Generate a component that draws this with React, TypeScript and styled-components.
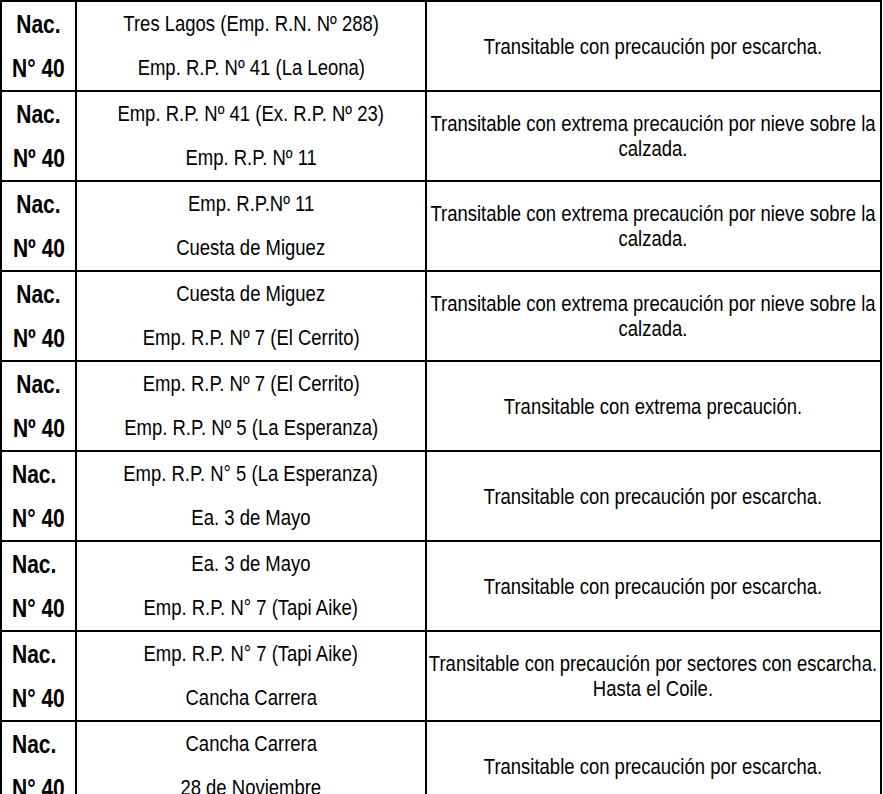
import styled, { createGlobalStyle } from "styled-components";

interface ITramo {
  ruta: string;
  desde: string;
  hasta: string;
  estado: string;
  left?: boolean;
}

const tramos: ITramo[] = [
  {
    ruta: "N° 40",
    desde: "Tres Lagos (Emp. R.N. Nº 288)",
    hasta: "Emp. R.P. Nº 41 (La Leona)",
    estado: "Transitable con precaución por escarcha.",
  },
  {
    ruta: "Nº 40",
    desde: "Emp. R.P. Nº 41 (Ex. R.P. Nº 23)",
    hasta: "Emp. R.P. Nº 11",
    estado: "Transitable con extrema precaución por nieve sobre la calzada.",
  },
  {
    ruta: "Nº 40",
    desde: "Emp. R.P.Nº 11",
    hasta: "Cuesta de Miguez",
    estado: "Transitable con extrema precaución por nieve sobre la calzada.",
  },
  {
    ruta: "Nº 40",
    desde: "Cuesta de Miguez",
    hasta: "Emp. R.P. Nº 7 (El Cerrito)",
    estado: "Transitable con extrema precaución por nieve sobre la calzada.",
  },
  {
    ruta: "Nº 40",
    desde: "Emp. R.P. Nº 7 (El Cerrito)",
    hasta: "Emp. R.P. Nº 5 (La Esperanza)",
    estado: "Transitable con extrema precaución.",
  },
  {
    ruta: "N° 40",
    desde: "Emp. R.P. N° 5 (La Esperanza)",
    hasta: "Ea. 3 de Mayo",
    estado: "Transitable con precaución por escarcha.",
    left: true,
  },
  {
    ruta: "N° 40",
    desde: "Ea. 3 de Mayo",
    hasta: "Emp. R.P. N° 7 (Tapi Aike)",
    estado: "Transitable con precaución por escarcha.",
    left: true,
  },
  {
    ruta: "N° 40",
    desde: "Emp. R.P. N° 7 (Tapi Aike)",
    hasta: "Cancha Carrera",
    estado: "Transitable con precaución por sectores con escarcha. Hasta el Coile.",
    left: true,
  },
  {
    ruta: "N° 40",
    desde: "Cancha Carrera",
    hasta: "28 de Noviembre",
    estado: "Transitable con precaución por escarcha.",
    left: true,
  },
];

// the source table uses a narrow Arial; squeeze Liberation Sans to match
const SQUEEZE = 0.84;

function App() {
  return (
    <>
      <GlobalStyle />
      <Table>
        <colgroup>
          <col style={{ width: 75 }} />
          <col style={{ width: 350 }} />
          <col />
        </colgroup>
        <tbody>
          {tramos.map((t, i) => (
            <Row key={i}>
              <RouteCell $left={t.left}>
                <Line>
                  <Squeeze $origin={t.left ? "left" : "center"}>Nac.</Squeeze>
                </Line>
                <Line>
                  <Squeeze $origin={t.left ? "left" : "center"}>{t.ruta}</Squeeze>
                </Line>
              </RouteCell>
              <PlaceCell>
                <Line>
                  <Squeeze>{t.desde}</Squeeze>
                </Line>
                <Line>
                  <Squeeze>{t.hasta}</Squeeze>
                </Line>
              </PlaceCell>
              <StateCell>
                <StateText>{t.estado}</StateText>
              </StateCell>
            </Row>
          ))}
        </tbody>
      </Table>
    </>
  );
}

const GlobalStyle = createGlobalStyle`
  html, body {
    overflow: hidden;
  }
  body {
    margin: 0;
    background: #ffffff;
    font-family: "Liberation Sans", Arial, sans-serif;
    color: #000;
  }
`;

const Table = styled.table`
  border-collapse: collapse;
  width: 882px;
  table-layout: fixed;
`;

const Row = styled.tr`
  height: 90px;
`;

const Cell = styled.td`
  border: 2px solid #000;
  padding: 0;
  vertical-align: middle;
  overflow: hidden;
`;

const Line = styled.div`
  line-height: 44px;
  white-space: nowrap;
`;

const Squeeze = styled.span<{ $origin?: string }>`
  display: inline-block;
  transform: scaleX(${SQUEEZE});
  transform-origin: ${(p) => p.$origin ?? "center"} center;
`;

const RouteCell = styled(Cell)<{ $left?: boolean }>`
  font-size: 25px;
  font-weight: bold;
  text-align: ${(p) => (p.$left ? "left" : "center")};
  padding-left: ${(p) => (p.$left ? "10px" : "0")};
`;

const PlaceCell = styled(Cell)`
  font-size: 22px;
  text-align: center;
`;

const StateCell = styled(Cell)`
  font-size: 22px;
`;

const StateText = styled.div`
  width: 542px;
  padding: 0 5px 0 1px;
  box-sizing: border-box;
  line-height: 25px;
  text-align: center;
  transform: scaleX(${SQUEEZE});
  transform-origin: left center;
`;

export default App;
